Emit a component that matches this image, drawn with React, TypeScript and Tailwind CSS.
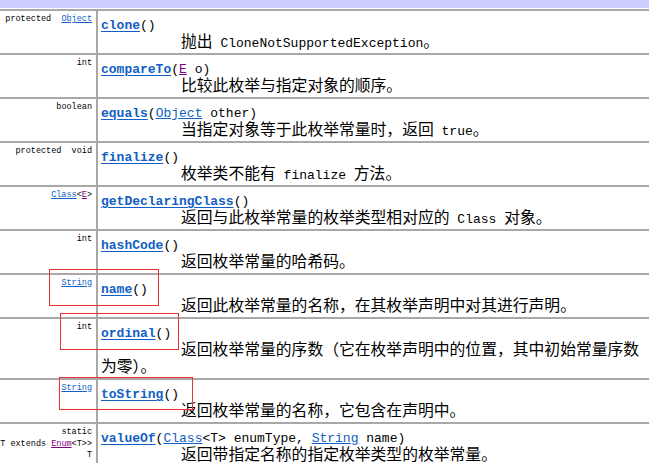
import type { ReactNode } from "react";

const mono = "font-['Liberation_Mono','Noto_Sans_CJK_SC',monospace]";

function L({ children }: { children: ReactNode }) {
  return <span className="text-[#1160c4] underline underline-offset-1">{children}</span>;
}

function V({ children }: { children: ReactNode }) {
  return <span className="text-[#800080] underline underline-offset-1">{children}</span>;
}

// method name, bold link
function N({ children }: { children: ReactNode }) {
  return <span className="font-bold text-[#1160c4] underline underline-offset-2">{children}</span>;
}

// latin words inside chinese description (small leading so the line box doesn't grow)
function M({ children }: { children: ReactNode }) {
  return <span className={`${mono} text-[13px] leading-[8px]`}>{children}</span>;
}

type Row = { left: ReactNode[]; method: ReactNode; desc: ReactNode };

const rows: Row[] = [
  {
    left: [<>protected  <L>Object</L></>],
    method: <><N>clone</N>()</>,
    desc: <>抛出<M> CloneNotSupportedException</M>。</>,
  },
  {
    left: ["int"],
    method: <><N>compareTo</N>(<V>E</V> o)</>,
    desc: <>比较此枚举与指定对象的顺序。</>,
  },
  {
    left: ["boolean"],
    method: <><N>equals</N>(<L>Object</L> other)</>,
    desc: <>当指定对象等于此枚举常量时，返回<M> true</M>。</>,
  },
  {
    left: ["protected  void"],
    method: <><N>finalize</N>()</>,
    desc: <>枚举类不能有<M> finalize </M>方法。</>,
  },
  {
    left: [<><L>Class</L>&lt;<V>E</V>&gt;</>],
    method: <><N>getDeclaringClass</N>()</>,
    desc: <>返回与此枚举常量的枚举类型相对应的<M> Class </M>对象。</>,
  },
  {
    left: ["int"],
    method: <><N>hashCode</N>()</>,
    desc: <>返回枚举常量的哈希码。</>,
  },
  {
    left: [<L>String</L>],
    method: <><N>name</N>()</>,
    desc: <>返回此枚举常量的名称，在其枚举声明中对其进行声明。</>,
  },
  {
    left: ["int"],
    method: <><N>ordinal</N>()</>,
    desc: <>返回枚举常量的序数（它在枚举声明中的位置，其中初始常量序数为零）。</>,
  },
  {
    left: [<L>String</L>],
    method: <><N>toString</N>()</>,
    desc: <>返回枚举常量的名称，它包含在声明中。</>,
  },
  {
    left: ["static", <>&lt;T extends <V>Enum</V>&lt;T&gt;&gt;</>, "T"],
    method: <><N>valueOf</N>(<L>Class</L>&lt;T&gt; enumType, <L>String</L> name)</>,
    desc: <>返回带指定名称的指定枚举类型的枚举常量。</>,
  },
];

export default function App() {
  return (
    <div className="relative w-[649px] h-[463px] overflow-hidden bg-white text-black">
      {/* summary header, scrolled mostly out of view */}
      <div className="h-[8px] overflow-hidden bg-[#ccccff]">
        <div className="-mt-[29px] pl-[3px] font-['Noto_Sans_CJK_SC',sans-serif] text-[22px] font-bold leading-[26px]">
          方法摘要
        </div>
      </div>

      <div className="pt-px">
        {rows.map((r, i) => (
          <div key={i} className="grid grid-cols-[98px_1fr] border-t-2 border-[#a8a8a8]">
            <div
              className={`flex flex-col items-end border-r-2 border-[#a8a8a8] pr-[4px] pt-[3px] ${mono} text-[8.5px] leading-[11.5px] whitespace-pre text-black`}
            >
              {r.left.map((l, j) => (
                <div key={j}>{l}</div>
              ))}
            </div>
            <div className="pl-[3px] pt-[8px] pb-[4px]">
              <div className={`${mono} text-[13px] leading-[13px] whitespace-pre`}>{r.method}</div>
              <div className="indent-[80px] font-['Noto_Sans_CJK_SC',sans-serif] text-[15.8px] leading-[17px]">
                {r.desc}
              </div>
            </div>
          </div>
        ))}
      </div>

      {/* red annotation boxes */}
      <div className="absolute left-[49px] top-[269px] w-[110px] h-[37px] border border-[#ec3236]" />
      <div className="absolute left-[60px] top-[313px] w-[119px] h-[37px] border border-[#ec3236]" />
      <div className="absolute left-[59px] top-[377px] w-[134px] h-[33px] border border-[#ec3236]" />
    </div>
  );
}
